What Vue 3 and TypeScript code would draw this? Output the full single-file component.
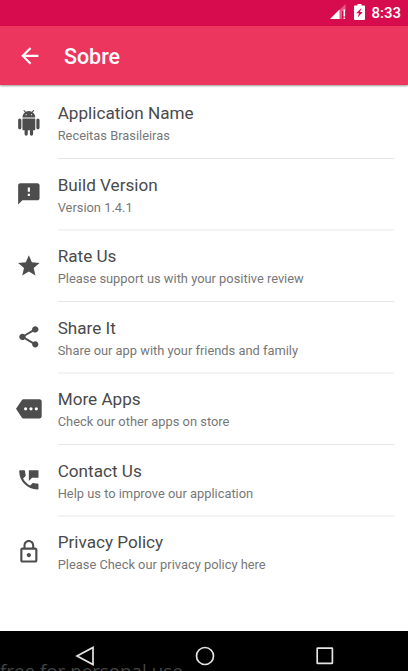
<script setup lang="ts">
interface Entry {
  title: string
  detail: string
  icon: string
}

const entries: Entry[] = [
  {
    title: 'Application Name',
    detail: 'Receitas Brasileiras',
    icon: 'M6 18c0 .55.45 1 1 1h1v3.500c0 .83.67 1.500 1.500 1.500s1.500-.67 1.500-1.500V19h2v3.500c0 .83.67 1.500 1.500 1.500s1.500-.67 1.500-1.500V19h1c.55 0 1-.45 1-1V8H6v10zM3.500 8C2.670 8 2 8.670 2 9.500v7c0 .83.67 1.500 1.500 1.500S5 17.330 5 16.500v-7C5 8.670 4.330 8 3.500 8zm17 0c-.83 0-1.500.67-1.500 1.500v7c0 .83.67 1.500 1.500 1.500s1.500-.67 1.500-1.500v-7c0-.83-.67-1.500-1.500-1.500zm-4.970-5.840l1.300-1.300c.2-.2.2-.51 0-.71-.2-.2-.51-.2-.71 0l-1.480 1.480C13.850 1.230 12.950 1 12 1c-.96 0-1.860.23-2.660.63L7.850.15c-.2-.2-.51-.2-.71 0-.2.2-.2.51 0 .71l1.310 1.310C6.970 3.260 6 5.010 6 7h12c0-1.990-.97-3.750-2.470-4.840zM10 5H9V4h1v1zm5 0h-1V4h1v1z',
  },
  {
    title: 'Build Version',
    detail: 'Version 1.4.1',
    icon: 'M20 2H4c-1.100 0-1.990.9-1.990 2L2 22l4-4h14c1.100 0 2-.9 2-2V4c0-1.100-.9-2-2-2zm-7 12h-2v-2h2v2zm0-4h-2V6h2v4z',
  },
  {
    title: 'Rate Us',
    detail: 'Please support us with your positive review',
    icon: 'M12 17.270L18.180 21l-1.640-7.030L22 9.240l-7.190-.61L12 2 9.190 8.630 2 9.240l5.460 4.730L5.820 21z',
  },
  {
    title: 'Share It',
    detail: 'Share our app with your friends and family',
    icon: 'M18 16.080c-.76 0-1.440.3-1.960.77L8.910 12.700c.05-.23.09-.46.09-.7s-.04-.47-.09-.7l7.050-4.110c.54.5 1.250.81 2.040.81 1.660 0 3-1.340 3-3s-1.340-3-3-3-3 1.340-3 3c0 .24.04.47.09.7L8.040 9.810C7.500 9.310 6.790 9 6 9c-1.660 0-3 1.340-3 3s1.340 3 3 3c.79 0 1.500-.31 2.040-.81l7.120 4.160c-.05.21-.08.43-.08.65 0 1.610 1.310 2.920 2.920 2.920s2.920-1.310 2.920-2.920-1.310-2.920-2.920-2.920z',
  },
  {
    title: 'More Apps',
    detail: 'Check our other apps on store',
    icon: 'M22 3H7c-.69 0-1.230.35-1.590.88L0 12l5.410 8.110c.36.53.97.89 1.660.89H22c1.100 0 2-.9 2-2V5c0-1.100-.9-2-2-2zM9 13.500c-.83 0-1.500-.67-1.500-1.500s.67-1.500 1.500-1.500 1.500.67 1.500 1.500-.67 1.500-1.500 1.500zm5 0c-.83 0-1.500-.67-1.500-1.500s.67-1.500 1.500-1.500 1.500.67 1.500 1.500-.67 1.500-1.500 1.500zm5 0c-.83 0-1.500-.67-1.500-1.500s.67-1.500 1.500-1.500 1.500.67 1.500 1.500-.67 1.500-1.500 1.500z',
  },
  {
    title: 'Contact Us',
    detail: 'Help us to improve our application',
    icon: 'M20 15.500c-1.250 0-2.450-.2-3.570-.57-.35-.11-.74-.03-1.020.24l-2.200 2.200c-2.830-1.440-5.150-3.750-6.590-6.580l2.200-2.210c.28-.27.36-.66.25-1.010C8.700 6.450 8.500 5.250 8.500 4c0-.55-.45-1-1-1H4c-.55 0-1 .45-1 1 0 9.390 7.610 17 17 17 .55 0 1-.45 1-1v-3.500c0-.55-.45-1-1-1zM12 3v10l3-3h6V3h-9z',
  },
  {
    title: 'Privacy Policy',
    detail: 'Please Check our privacy policy here',
    icon: 'M12 17c1.100 0 2-.9 2-2s-.9-2-2-2-2 .9-2 2 .9 2 2 2zm6-9h-1V6c0-2.760-2.240-5-5-5S7 3.240 7 6v2H6c-1.100 0-2 .9-2 2v10c0 1.100.9 2 2 2h12c1.100 0 2-.9 2-2V10c0-1.100-.9-2-2-2zM8.900 6c0-1.710 1.390-3.100 3.100-3.100s3.100 1.390 3.100 3.100v2H8.900V6zM18 20H6V10h12v10z',
  },
]
</script>

<template>
  <div class="screen">
    <div class="status">
      <svg class="signal" viewBox="0 0 16 16">
        <path d="M15.500 0V7H12V15H9V6.500z" fill="#fff" fill-opacity=".32" />
        <path d="M9.500 5.500V15H0z" fill="#fff" />
        <path d="M13.500 5.500h1.600v7h-1.600zM13.500 13.500h1.600v1.500h-1.600z" fill="#fff" />
      </svg>
      <svg class="battery" viewBox="0 0 11 16">
        <path fill="#fff" fill-rule="evenodd" d="M3.500 0h4v1.600H10q1 0 1 1V15q0 1-1 1H1q-1 0-1-1V2.600q0-1 1-1h2.500zM7.400 4L2.200 9.300H5L3.700 13.500 8.800 8H6z" />
      </svg>
      <span>8:33</span>
    </div>
    <header class="toolbar">
      <svg class="back" viewBox="0 0 24 24">
        <path d="M20 11H7.830l5.590-5.590L12 4l-8 8 8 8 1.410-1.410L7.830 13H20z" fill="#fff" />
      </svg>
      <h1>Sobre</h1>
    </header>
    <main class="list">
      <div v-for="entry in entries" :key="entry.title" class="row">
        <svg class="icon" viewBox="0 0 24 24"><path :d="entry.icon" /></svg>
        <div class="body">
          <div class="title">{{ entry.title }}</div>
          <div class="detail">{{ entry.detail }}</div>
        </div>
      </div>
    </main>
    <footer class="nav">
      <svg viewBox="0 0 20 20"><path d="M18 1.500V18.500L2 10z" /></svg>
      <svg viewBox="0 0 20 20"><circle cx="10" cy="10" r="8.500" /></svg>
      <svg viewBox="0 0 20 20"><rect x="2.200" y="2.200" width="15.200" height="15.200" rx=".5" /></svg>
      <span class="watermark">free for personal use</span>
    </footer>
  </div>
</template>

<style>
body {
  margin: 0;
  background: #fff;
}
</style>

<style scoped>
.screen {
  width: 408px;
  height: 671px;
  display: flex;
  flex-direction: column;
  overflow: hidden;
  background: #fff;
  font-family: Roboto, sans-serif;
}
.status {
  height: 26px;
  flex: none;
  box-sizing: border-box;
  padding-right: 7px;
  display: flex;
  align-items: center;
  justify-content: flex-end;
  background: #d70c4f;
  color: #fff;
  font-size: 15px;
  font-weight: 500;
}
.signal {
  width: 16px;
  height: 16px;
  margin: 0 8px 2px 0;
}
.battery {
  width: 11px;
  height: 16px;
  margin: 0 6.500px 2px 0;
}
.toolbar {
  height: 59px;
  flex: none;
  display: flex;
  align-items: center;
  padding-left: 17.300px;
  background: #ec365d;
  box-shadow: 0 1px 2px rgba(0, 0, 0, 0.4);
}
.back {
  width: 25.700px;
  height: 25.700px;
  margin-right: 21px;
}
h1 {
  margin: 3px 0 0;
  color: #fff;
  font-size: 21.430px;
  font-weight: 500;
  line-height: 26px;
}
.list {
  flex: 1;
  padding: 2px 14px 0 16px;
}
.row {
  display: flex;
  height: 71.500px;
}
.icon {
  width: 25.700px;
  height: 25.700px;
  flex: none;
  margin: 22.900px 16px 0 0;
  fill: #4d4d4d;
}
.body {
  flex: 1;
  box-sizing: border-box;
  padding-top: 15.400px;
  border-bottom: 1px solid #e6e6e6;
}
.row:nth-child(even) .body {
  margin-bottom: -1px;
  border-bottom: 2px solid #f3f3f3;
}
.row:last-child .body {
  border-bottom: none;
}
.title {
  font-size: 17.140px;
  line-height: 22px;
  color: #4a4a4a;
}
.detail {
  margin-top: 3.700px;
  font-size: 12.860px;
  line-height: 16px;
  color: #777;
}
.nav {
  position: relative;
  height: 40px;
  flex: none;
  box-sizing: border-box;
  padding: 15.300px 73px 0 75px;
  display: flex;
  justify-content: space-between;
  background: #000;
  overflow: hidden;
}
.nav svg {
  width: 20px;
  height: 20px;
  fill: none;
  stroke: #e4e4e4;
  stroke-width: 1.700;
}
.watermark {
  position: absolute;
  left: 0;
  top: 28px;
  color: #444;
  font: 18.800px/24px "Open Sans", sans-serif;
  white-space: nowrap;
}
</style>
